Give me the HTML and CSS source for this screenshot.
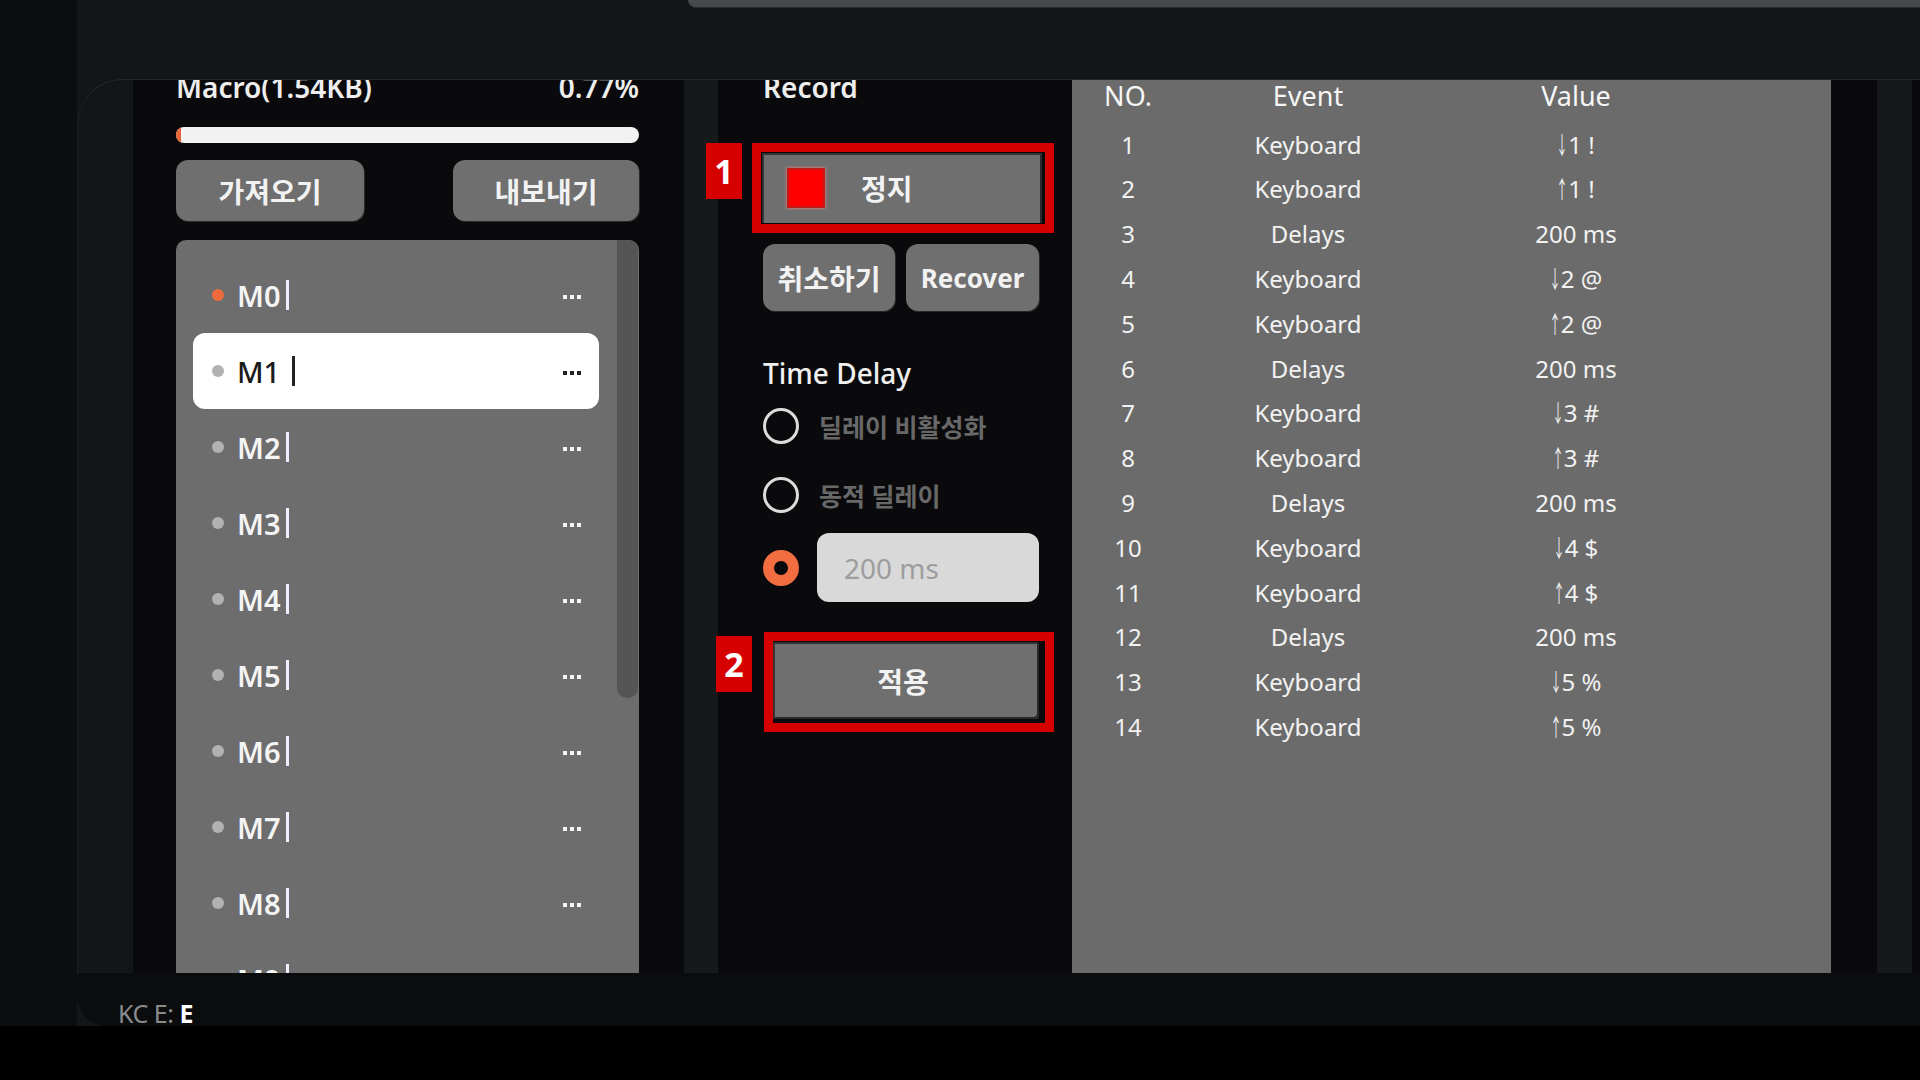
FILE: index.html
```html
<!DOCTYPE html>
<html lang="ko">
<head>
<meta charset="utf-8">
<title>Macro</title>
<link rel="stylesheet" href="styles.css">
</head>
<body>
<div class="screen">
  <aside class="rail"></aside>
  <div class="app">
    <header class="topbar"><div class="topbar-tab"></div></header>
    <main class="panel">
      <div class="pad"></div>

      <section class="col-macro">
        <div class="head"><span>Macro(1.54KB)</span><span>0.77%</span></div>
        <div class="progress"><div class="progress-fill" style="width:0.77%"></div></div>
        <div class="btn-row">
          <div class="btn btn-wide">가져오기</div>
          <div class="btn btn-wide btn-wide-r">내보내기</div>
        </div>
        <div class="list">
          <div class="list-items">
            <div class="item"><span class="dot active"></span><span class="name">M0<span class="caret"></span></span><span class="more"><i></i><i></i><i></i></span></div>
            <div class="item selected"><span class="dot"></span><span class="name">M1<span class="caret"></span></span><span class="more"><i></i><i></i><i></i></span></div>
            <div class="item"><span class="dot"></span><span class="name">M2<span class="caret"></span></span><span class="more"><i></i><i></i><i></i></span></div>
            <div class="item"><span class="dot"></span><span class="name">M3<span class="caret"></span></span><span class="more"><i></i><i></i><i></i></span></div>
            <div class="item"><span class="dot"></span><span class="name">M4<span class="caret"></span></span><span class="more"><i></i><i></i><i></i></span></div>
            <div class="item"><span class="dot"></span><span class="name">M5<span class="caret"></span></span><span class="more"><i></i><i></i><i></i></span></div>
            <div class="item"><span class="dot"></span><span class="name">M6<span class="caret"></span></span><span class="more"><i></i><i></i><i></i></span></div>
            <div class="item"><span class="dot"></span><span class="name">M7<span class="caret"></span></span><span class="more"><i></i><i></i><i></i></span></div>
            <div class="item"><span class="dot"></span><span class="name">M8<span class="caret"></span></span><span class="more"><i></i><i></i><i></i></span></div>
            <div class="item"><span class="dot"></span><span class="name">M9<span class="caret"></span></span><span class="more"><i></i><i></i><i></i></span></div>
          </div>
          <div class="scroll"><div class="thumb"></div></div>
        </div>
      </section>

      <div class="strip strip-l"></div>

      <section class="col-record">
        <div class="head">Record</div>
        <div class="annot annot-1">
          <span class="tag tag-1">1</span>
          <div class="stop"><span class="stop-icon"></span>정지</div>
        </div>
        <div class="pair">
          <div class="btn b1">취소하기</div>
          <div class="btn b2">Recover</div>
        </div>
        <div class="td-title">Time Delay</div>
        <div class="radio-row r1"><span class="radio"></span><span>딜레이 비활성화</span></div>
        <div class="radio-row r2"><span class="radio"></span><span>동적 딜레이</span></div>
        <div class="radio-row r3"><span class="radio on"></span><input class="delay-input" type="text" placeholder="200 ms"></div>
        <div class="annot annot-2">
          <span class="tag tag-2">2</span>
          <div class="apply">적용</div>
        </div>
      </section>

      <section class="table">
        <div class="t-head"><span>NO.</span><span>Event</span><span>Value</span></div>
        <div class="t-row"><span>1</span><span>Keyboard</span><span><i class="arr">↓</i>1 !</span></div>
        <div class="t-row"><span>2</span><span>Keyboard</span><span><i class="arr">↑</i>1 !</span></div>
        <div class="t-row"><span>3</span><span>Delays</span><span>200 ms</span></div>
        <div class="t-row"><span>4</span><span>Keyboard</span><span><i class="arr">↓</i>2 @</span></div>
        <div class="t-row"><span>5</span><span>Keyboard</span><span><i class="arr">↑</i>2 @</span></div>
        <div class="t-row"><span>6</span><span>Delays</span><span>200 ms</span></div>
        <div class="t-row"><span>7</span><span>Keyboard</span><span><i class="arr">↓</i>3 #</span></div>
        <div class="t-row"><span>8</span><span>Keyboard</span><span><i class="arr">↑</i>3 #</span></div>
        <div class="t-row"><span>9</span><span>Delays</span><span>200 ms</span></div>
        <div class="t-row"><span>10</span><span>Keyboard</span><span><i class="arr">↓</i>4 $</span></div>
        <div class="t-row"><span>11</span><span>Keyboard</span><span><i class="arr">↑</i>4 $</span></div>
        <div class="t-row"><span>12</span><span>Delays</span><span>200 ms</span></div>
        <div class="t-row"><span>13</span><span>Keyboard</span><span><i class="arr">↓</i>5 %</span></div>
        <div class="t-row"><span>14</span><span>Keyboard</span><span><i class="arr">↑</i>5 %</span></div>
      </section>

      <div class="dark dark-r"></div>
      <div class="strip strip-r"></div>
      <div class="dark dark-end"></div>
    </main>
    <footer class="status">KC E: <b>E</b></footer>
  </div>
</div>
<div class="bottom"></div>
</body>
</html>
```

FILE: styles.css
```css
* { box-sizing: border-box; margin: 0; padding: 0; }

html, body {
  width: 1920px;
  height: 1080px;
  overflow: hidden;
  background: #000;
}

body {
  font-family: "Noto Sans", "Noto Sans CJK KR", sans-serif;
  color: #f2f2f2;
}

.screen {
  display: flex;
  height: 1026px;
}

.rail {
  width: 77px;
  flex: none;
  background: #0c0d0f;
}

.app {
  flex: 1;
  min-width: 0;
  display: flex;
  flex-direction: column;
  background: #131619;
}

.topbar {
  height: 79px;
  flex: none;
}

.topbar-tab {
  margin-left: 611px;
  height: 8px;
  background: #48494b;
  border-bottom: 1px solid #2b2c2e;
  border-bottom-left-radius: 8px;
}

.panel {
  height: 894px;
  flex: none;
  display: flex;
  border-top: 1px solid #26292c;
  border-left: 1px solid #1d2023;
  border-top-left-radius: 46px;
  overflow: hidden;
  background: #131619;
}

.pad {
  width: 55px;
  flex: none;
}

/* ---------- left column ---------- */
.col-macro {
  width: 551px;
  flex: none;
  background: #0a0a0c;
  padding: 0 45px 0 43px;
  display: flex;
  flex-direction: column;
}

.head {
  display: flex;
  justify-content: space-between;
  font-size: 28px;
  font-weight: 600;
  line-height: 28px;
  margin-top: -7px;
  color: #eeeeee;
}

.progress {
  margin-top: 26px;
  height: 16px;
  border-radius: 8px;
  background: #f2f2f2;
  overflow: hidden;
  display: flex;
  flex: none;
}

.progress-fill {
  min-width: 5px;
  background: #e8643a;
}

.btn-row {
  margin-top: 17px;
  display: flex;
  justify-content: space-between;
  flex: none;
}

.btn {
  background: #6f6f6f;
  border-radius: 12px;
  color: #f2f2f2;
  font-size: 28px;
  font-weight: 700;
  display: flex;
  align-items: center;
  justify-content: center;
  box-shadow: 1px 1px 0 #2a2a2a;
}

.btn-wide {
  width: 188px;
  height: 61px;
}

.btn-wide-r {
  width: 186px;
}

.list {
  margin-top: 19px;
  flex: 1;
  min-height: 0;
  background: #6d6d6d;
  border-radius: 10px 10px 0 0;
  display: flex;
  overflow: hidden;
}

.list-items {
  flex: 1;
  padding: 17px 18px 0 17px;
}

.item {
  height: 76px;
  display: flex;
  align-items: center;
  padding: 0 18px 0 19px;
  border-radius: 12px;
  font-size: 29px;
  font-weight: 600;
  color: #f4f4f4;
}

.item.selected {
  background: #ffffff;
  color: #1a1a1a;
  font-weight: 500;
}

.dot {
  width: 12px;
  height: 12px;
  border-radius: 50%;
  background: #b2b2b2;
  margin-right: 13px;
  flex: none;
}

.dot.active {
  background: #ef6a3c;
}

.name {
  flex: 1;
  display: flex;
  align-items: center;
}

.caret {
  width: 3px;
  height: 30px;
  margin-left: 5px;
  background: #eef0ff;
}

.selected .caret {
  background: #222;
  margin-left: 12px;
}

.more {
  display: flex;
  gap: 3px;
  margin-top: 4px;
}

.more i {
  width: 4px;
  height: 4px;
  background: #f5f5f5;
}

.selected .more i {
  background: #222;
}

.scroll {
  width: 21px;
  margin-right: 1px;
  flex: none;
}

.thumb {
  height: 458px;
  background: #555555;
  border-radius: 0 10px 10px 10px;
}

/* ---------- strips ---------- */
.strip {
  flex: none;
  background: #16191c;
}

.strip-l { width: 34px; }
.strip-r { width: 35px; }

.dark {
  background: #0a0a0c;
}

.dark-r { width: 46px; flex: none; }
.dark-end { flex: 1; }

/* ---------- record column ---------- */
.col-record {
  width: 354px;
  flex: none;
  background: #0a0a0c;
  padding-left: 45px;
  display: flex;
  flex-direction: column;
}

.annot {
  position: relative;
  border: 9px solid #d60000;
  flex: none;
}

.annot-1 {
  margin-top: 42px;
  margin-left: -11px;
  width: 302px;
  padding: 1px 3px 1px 1px;
}

.annot-2 {
  margin-top: 30px;
  margin-left: 1px;
  width: 290px;
  padding: 1px 6px 4px 0;
}

.tag {
  position: absolute;
  width: 36px;
  height: 56px;
  background: #d60000;
  color: #fff;
  font-size: 34px;
  font-weight: 700;
  display: flex;
  align-items: center;
  justify-content: center;
}

.tag-1 { left: -55px; top: -9px; }
.tag-2 { left: -57px; top: -5px; }

.stop {
  height: 70px;
  background: #6f6f6f;
  display: flex;
  align-items: center;
  padding-left: 25px;
  font-size: 28px;
  font-weight: 700;
  box-shadow: inset 2px 2px 0 #333, inset -2px 0 0 #2a2a2a;
}

.stop-icon {
  width: 38px;
  height: 40px;
  background: #ff0000;
  border: 2px solid #c41a1a;
  box-shadow: 0 0 3px #ff8a8a;
  margin-right: 36px;
}

.pair {
  margin-top: 11px;
  display: flex;
  gap: 11px;
  flex: none;
}

.pair .btn { height: 67px; }
.b1 { width: 132px; }
.b2 { width: 133px; font-size: 26px; }

.td-title {
  margin-top: 44px;
  font-size: 28px;
  font-weight: 500;
  line-height: 36px;
  color: #f0f0f0;
}

.radio-row {
  display: flex;
  align-items: center;
  gap: 20px;
  height: 56px;
  font-size: 25px;
  font-weight: 700;
  color: #686868;
  flex: none;
}

.r1 { margin-top: 7px; }
.r2 { margin-top: 13px; }
.r3 { margin-top: 10px; height: 69px; gap: 18px; }

.radio {
  width: 36px;
  height: 36px;
  border-radius: 50%;
  border: 3px solid #dcdcdc;
  flex: none;
}

.radio.on {
  border: 11px solid #f26d40;
}

.delay-input {
  width: 222px;
  height: 69px;
  border: none;
  outline: none;
  border-radius: 12px;
  background: #d9d9d9;
  font-family: inherit;
  font-size: 28px;
  padding-left: 27px;
  color: #333;
}

.delay-input::placeholder {
  color: #9d9d9d;
}

.apply {
  height: 77px;
  background: #6f6f6f;
  border-radius: 0 4px 4px 0;
  display: flex;
  align-items: center;
  justify-content: center;
  padding-right: 6px;
  font-size: 28px;
  font-weight: 700;
  box-shadow: inset 2px 2px 0 #333, inset -2px -2px 0 #2a2a2a;
}

/* ---------- table ---------- */
.table {
  width: 759px;
  flex: none;
  background: #6b6b6b;
}

.t-head,
.t-row {
  display: grid;
  grid-template-columns: 112px 248px 288px 1fr;
  text-align: center;
}

.t-head {
  height: 32px;
  line-height: 32px;
  font-size: 27px;
  margin-bottom: 10.6px;
  color: #f6f6f6;
}

.t-row {
  height: 44.8px;
  line-height: 44.8px;
  font-size: 24px;
  color: #f2f2f2;
}

.arr {
  display: inline-flex;
  justify-content: center;
  width: 10px;
  font-style: normal;
  transform: scaleX(0.5);
  margin-right: 1px;
}

/* ---------- status ---------- */
.status {
  height: 53px;
  flex: none;
  background: #0b0c0e;
  border-bottom-left-radius: 30px;
  padding: 25px 0 0 41px;
  font-size: 25px;
  line-height: 30px;
  letter-spacing: -0.5px;
  color: #8a8a8a;
}

.status b {
  color: #ffffff;
  font-weight: 700;
}

.bottom {
  height: 54px;
  background: #000;
}
```
